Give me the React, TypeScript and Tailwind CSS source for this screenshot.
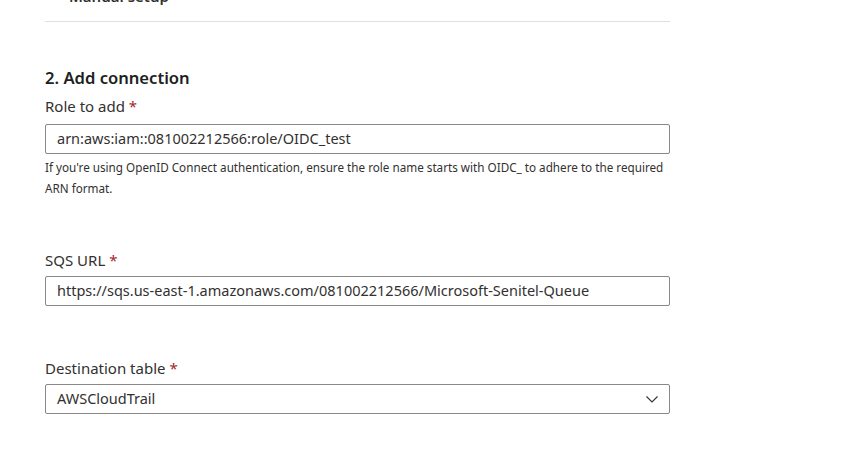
import React from "react";

const font = { fontFamily: '"Segoe UI", "Noto Sans", "Open Sans", sans-serif' };

function Label({ text }: { text: string }) {
  return (
    <div className="text-[15px] leading-[20px] text-[#323130]">
      {text} <span className="text-[#a4262c]">*</span>
    </div>
  );
}

function TextBox({ value, first }: { value: string; first?: boolean }) {
  return (
    <div
      className={
        first
          ? "mt-[8px] flex h-[30px] items-center rounded-[2px] border border-[#8a8886] bg-white px-[11px] text-[14.5px] text-[#323130]"
          : "mt-[6px] flex h-[30px] items-center rounded-[2px] border border-[#8a8886] bg-white px-[11px] text-[14.5px] text-[#323130]"
      }
    >
      {value}
    </div>
  );
}

export default function App() {
  return (
    <div className="min-h-[471px] w-[846px] overflow-hidden bg-white" style={font}>
      <div className="ml-[45px] w-[625px]">
        <div className="-mt-[14px] flex h-[20px] items-center gap-[14px] text-[15px] font-semibold leading-[20px] text-[#323130]">
          <span className="text-[10px]">&#9650;</span>
          <span>Manual setup</span>
        </div>
        <div className="mt-[15px] h-px bg-[#e1dfdd]" />
        <div className="mt-[45px] text-[16.6px] font-semibold leading-[22px] text-[#201f1e]">
          2. Add connection
        </div>
        <div className="mt-[7px]">
          <Label text="Role to add" />
          <TextBox first value="arn:aws:iam::081002212566:role/OIDC_test" />
          <div className="mt-[3px] text-[11.7px] leading-[21px] text-[#323130]">
            If you're using OpenID Connect authentication, ensure the role name starts with OIDC_ to adhere to the required ARN format.
          </div>
        </div>
        <div className="mt-[51px]">
          <Label text="SQS URL" />
          <TextBox value="https://sqs.us-east-1.amazonaws.com/081002212566/Microsoft-Senitel-Queue" />
        </div>
        <div className="mt-[52px]">
          <Label text="Destination table" />
          <div className="mt-[6px] flex h-[30px] items-center justify-between rounded-[2px] border border-[#8a8886] bg-white pl-[11px] pr-[9px] text-[14.5px] text-[#323130]">
            <span>AWSCloudTrail</span>
            <svg width="16" height="16" viewBox="0 0 16 16" fill="none">
              <path d="M2.5 5.5 L8 11 L13.5 5.5" stroke="#323130" strokeWidth="1.1" />
            </svg>
          </div>
        </div>
      </div>
    </div>
  );
}
